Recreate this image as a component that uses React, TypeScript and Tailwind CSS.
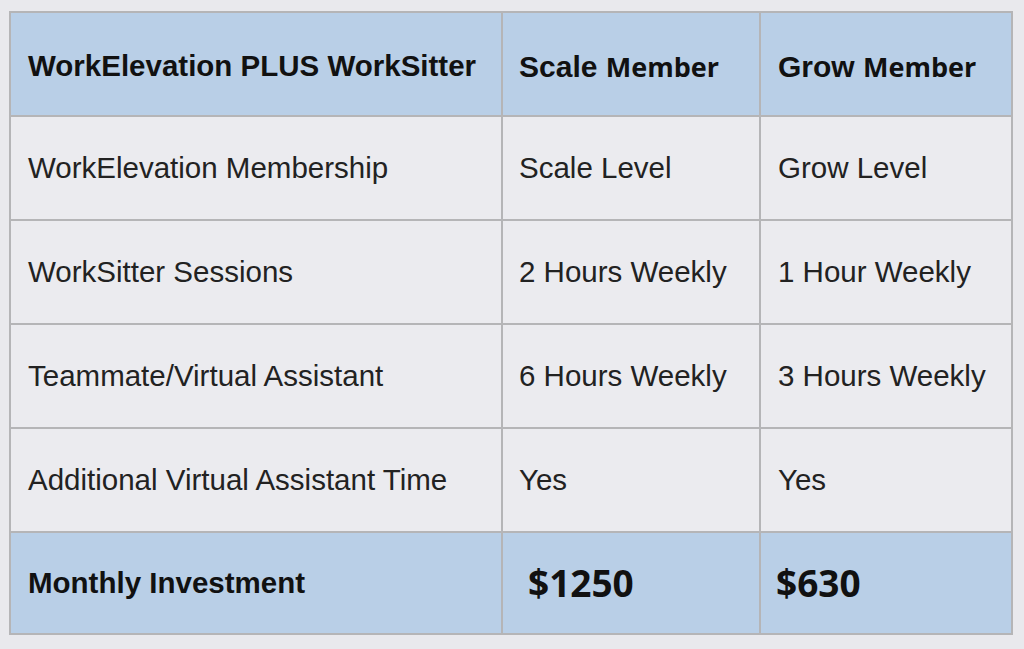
const rows = [
  ["WorkElevation Membership", "Scale Level", "Grow Level"],
  ["WorkSitter Sessions", "2 Hours Weekly", "1 Hour Weekly"],
  ["Teammate/Virtual Assistant", "6 Hours Weekly", "3 Hours Weekly"],
  ["Additional Virtual Assistant Time", "Yes", "Yes"],
];

const cell = "border-2 border-[#b5b5b7] px-[17px] align-middle";

export default function App() {
  return (
    <div className="w-[1024px] h-[649px] bg-[#e9e9ed] pt-[11px] pl-[9px] font-['Liberation_Sans',Arial,sans-serif]">
      <table className="table-fixed border-collapse w-[1002px]">
        <colgroup>
          <col className="w-[492px]" />
          <col className="w-[258px]" />
          <col className="w-[252px]" />
        </colgroup>
        <tbody>
          <tr className="h-[104px] bg-[#b9cfe7] text-[#111]">
            <td className={`${cell} pt-[4px] text-[29.5px] font-bold`}>WorkElevation PLUS WorkSitter</td>
            <td className={`${cell} pt-[4px] pl-[16px] text-[30px] font-bold`}>
              Scale <span className="font-['Open_Sans',sans-serif] text-[27px]">Member</span>
            </td>
            <td className={`${cell} pt-[4px] text-[30px] font-bold`}>
              Grow <span className="font-['Open_Sans',sans-serif] text-[27px]">Member</span>
            </td>
          </tr>
          {rows.map((r) => (
            <tr key={r[0]} className="h-[104px] bg-[#ebebef] text-[#222] text-[29.5px]">
              {r.map((c, i) => (
                <td key={i} className={i === 1 ? `${cell} pl-[16px]` : cell}>
                  {c}
                </td>
              ))}
            </tr>
          ))}
          <tr className="h-[102px] bg-[#b9cfe7] text-[#111]">
            <td className={`${cell} text-[29.5px] font-bold`}>Monthly Investment</td>
            <td className={`${cell} pl-[25px] text-[37px] font-bold font-['Open_Sans',sans-serif]`}>$1250</td>
            <td className={`${cell} pl-[15px] text-[37px] font-bold font-['Open_Sans',sans-serif]`}>$630</td>
          </tr>
        </tbody>
      </table>
    </div>
  );
}
